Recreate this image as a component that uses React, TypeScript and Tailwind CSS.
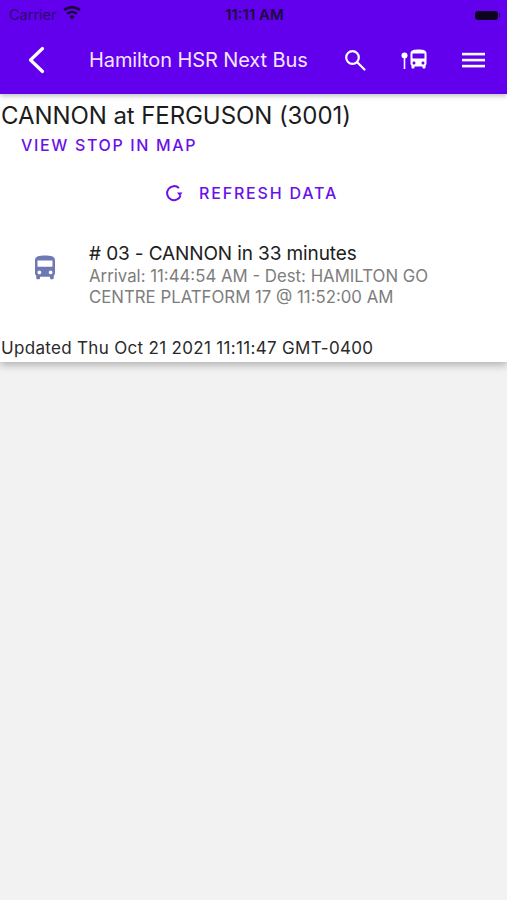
const BUS_PATH =
  'M4 16c0 .88.39 1.67 1 2.22V20c0 .55.45 1 1 1h1c.55 0 1-.45 1-1v-1h8v1c0 .55.45 1 1 1h1c.55 0 1-.45 1-1v-1.78c.61-.55 1-1.34 1-2.22V6c0-3.5-3.58-4-8-4s-8 .5-8 4v10zm3.5 1c-.83 0-1.5-.67-1.5-1.5S6.67 14 7.5 14s1.5.67 1.5 1.5S8.33 17 7.5 17zm9 0c-.83 0-1.5-.67-1.5-1.5s.67-1.5 1.5-1.5 1.5.67 1.5 1.5-.67 1.5-1.5 1.5zm1.5-6H6V6h12v5z';

const StatusBar = () => (
  <div className="flex h-[28px] items-center justify-between pl-[9px] pr-[7px] text-[14.5px] text-[#1d0a4a]">
    <div className="flex w-[100px] items-center gap-[6px]">
      <span className="opacity-80">Carrier</span>
      <svg width="18" height="14" viewBox="0 0 18 14" fill="#160838" className="-mt-[4px]">
        <path d="M9 13.5 6.4 10.4a4 4 0 0 1 5.2 0L9 13.5zM4.9 8.7 3.4 6.9a8.7 8.7 0 0 1 11.2 0l-1.5 1.8a6.4 6.4 0 0 0-8.2 0zM1.9 5.1.3 3.2a13.5 13.5 0 0 1 17.4 0l-1.6 1.9a11 11 0 0 0-14.2 0z" />
      </svg>
    </div>
    <span className="text-[15px] font-semibold text-[#1a0a3c]">11:11 AM</span>
    <div className="flex w-[100px] justify-end">
      <div className="flex items-center">
        <div className="h-[9px] w-[23px] rounded-[3px] bg-[#0d0420]" />
        <div className="ml-px h-[4px] w-[1px] bg-[#2a1060]" />
      </div>
    </div>
  </div>
);

const NavBar = () => (
  <div className="flex h-[63px] items-center pb-[2px] pl-[27px] pr-[22px] text-white">
    <svg width="18" height="28" viewBox="0 0 18 28" fill="none" stroke="currentColor" strokeWidth="3.2" strokeLinecap="round" strokeLinejoin="round">
      <path d="M15.5 2.5 3.5 14l12 11.500" />
    </svg>
    <span className="ml-[44px] text-[20px] leading-none tracking-[-0.1px] text-[#f3e6ff]">Hamilton HSR Next Bus</span>
    <div className="ml-auto flex items-center">
      <svg width="24" height="24" viewBox="0 0 24 24" fill="none" stroke="currentColor" strokeWidth="2.2" strokeLinecap="round">
        <circle cx="9.500" cy="9.500" r="6.300" />
        <path d="m14.500 14.500 7 7" />
      </svg>
      <svg width="28" height="24" viewBox="0 0 28 24" fill="currentColor" className="ml-[34px]">
        <circle cx="3.500" cy="7.500" r="3" />
        <rect x="2.700" y="9" width="1.600" height="12" />
        <path transform="translate(5.500 -0.500) scale(1)" d={BUS_PATH} />
      </svg>
      <svg width="23" height="18" viewBox="0 0 23 18" fill="currentColor" className="ml-[33px]">
        <rect y="1.800" width="23" height="2.600" />
        <rect y="7.800" width="23" height="2.600" />
        <rect y="13.800" width="23" height="2.600" />
      </svg>
    </div>
  </div>
);

export default function App() {
  return (
    <div className="min-h-[900px] bg-[#f2f2f2] font-['Inter','Noto_Sans',sans-serif]">
      <header className="relative z-10 h-[94px] bg-[#6200ee] pt-[1px] shadow-[0_2px_5px_rgba(0,0,0,0.25)]">
        <StatusBar />
        <NavBar />
      </header>

      <main className="h-[268px] bg-white shadow-[0_3px_8px_rgba(0,0,0,0.28)]">
        <h1 className="pl-[1px] pt-[8px] text-[24px] leading-[28px] tracking-[-0.08px] text-[#1c1c1c]">CANNON at FERGUSON (3001)</h1>

        <button className="mt-[5px] block pl-[21px] text-[16px] font-medium leading-[20px] tracking-[1.65px] text-[#6a10e8]">
          VIEW STOP IN MAP
        </button>

        <div className="mt-[28px] flex items-center pl-[164px] text-[16px] font-medium leading-[20px] tracking-[1.82px] text-[#6a10e8]">
          <svg width="20" height="20" viewBox="0 0 20 20" fill="none" stroke="currentColor" strokeWidth="2">
            <path d="M16.700 12.500A7 7 0 1 1 15 5.100" />
            <path d="M18.500 9.500h-5.500l2.800 3.800z" fill="currentColor" stroke="none" />
          </svg>
          <span className="ml-[15px]">REFRESH DATA</span>
        </div>

        <div className="mt-[40px] flex items-start">
          <div className="flex w-[89px] shrink-0 justify-center pt-[10px]">
            <svg width="30" height="30" viewBox="0 0 24 24" fill="#6d78b4">
              <path d={BUS_PATH} />
            </svg>
          </div>
          <div>
            <p className="text-[19px] leading-[22px] tracking-[-0.12px] text-[#202020]"># 03 - CANNON in 33 minutes</p>
            <p className="mt-[1px] w-[350px] text-[16.800px] leading-[21px] text-[#7d7d7d]">
              Arrival: 11:44:54 AM - Dest: HAMILTON GO CENTRE PLATFORM 17 @ 11:52:00 AM
            </p>
          </div>
        </div>

        <p className="mt-[30px] pl-[1px] text-[17px] leading-[20px] tracking-[0.32px] text-[#2a2a2a]">
          Updated Thu Oct 21 2021 11:11:47 GMT-0400
        </p>
      </main>
    </div>
  );
}
